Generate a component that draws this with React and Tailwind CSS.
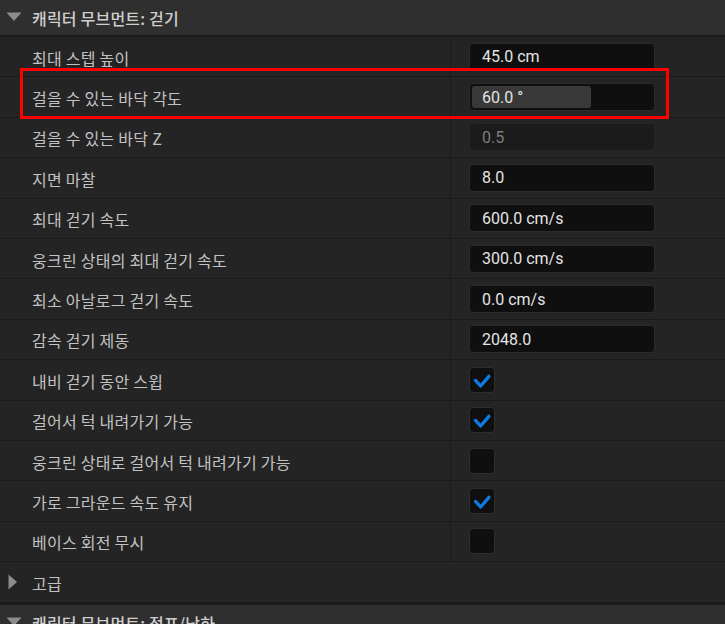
import React from "react";

const FONT = { fontFamily: '"Noto Sans CJK KR", "Noto Sans", sans-serif' };
const NUM = { fontFamily: 'Roboto, "Noto Sans CJK KR", sans-serif' };

function Check() {
  return (
    <svg width="26" height="26" viewBox="0 0 26 26" className="block">
      <path d="M6 13.5 L11.5 19.5 L20.5 9" fill="none" stroke="#0f7be0" strokeWidth="3.6" strokeLinecap="round" strokeLinejoin="round" />
    </svg>
  );
}

function Checkbox({ checked }) {
  return (
    <div className="w-[26px] h-[26px] rounded-[4px] bg-[#0f0f0f] border border-[#2e2e2e] flex items-center justify-center">
      {checked ? <Check /> : null}
    </div>
  );
}

function Input({ value, disabled, fill }) {
  return (
    <div
      className={
        "relative w-[186px] h-[28px] rounded-[4px] border flex items-center " +
        (disabled ? "bg-[#1b1b1b] border-[#262626]" : "bg-[#0f0f0f] border-[#2b2b2b]")
      }
    >
      {fill ? (
        <div className="absolute left-[2px] top-[2px] bottom-[2px] w-[119px] rounded-[3px] bg-[#383838]" />
      ) : null}
      <span
        className={"relative pl-[12px] pt-[1px] text-[16px] " + (disabled ? "text-[#7c7c7c]" : "text-[#e4e4e4]")}
        style={NUM}
      >
        {value}
      </span>
    </div>
  );
}

const rows = [
  { label: "최대 스텝 높이", input: "45.0 cm" },
  { label: "걸을 수 있는 바닥 각도", input: "60.0 °", fill: true },
  { label: "걸을 수 있는 바닥 Z", input: "0.5", disabled: true },
  { label: "지면 마찰", input: "8.0" },
  { label: "최대 걷기 속도", input: "600.0 cm/s" },
  { label: "웅크린 상태의 최대 걷기 속도", input: "300.0 cm/s" },
  { label: "최소 아날로그 걷기 속도", input: "0.0 cm/s" },
  { label: "감속 걷기 제동", input: "2048.0" },
  { label: "내비 걷기 동안 스윕", check: true },
  { label: "걸어서 턱 내려가기 가능", check: true },
  { label: "웅크린 상태로 걸어서 턱 내려가기 가능", check: false },
  { label: "가로 그라운드 속도 유지", check: true },
  { label: "베이스 회전 무시", check: false },
];

function Header({ title }) {
  return (
    <div className="h-[35px] shrink-0 bg-[#2f2f2f] flex items-center border-b-2 border-[#1a1a1a] box-content">
      <svg width="32" height="35" viewBox="0 0 32 35" className="shrink-0">
        <polygon points="6.5,12.5 21.5,12.5 14,21" fill="#8c8c8c" />
      </svg>
      <span className="text-[16px] text-[#cfcfcf] font-medium tracking-[0.2px]" style={FONT}>
        {title}
      </span>
    </div>
  );
}

export default function App() {
  return (
    <div className="relative w-[725px] h-[624px] overflow-hidden bg-[#242424]" style={FONT}>
      <Header title="캐릭터 무브먼트: 걷기" />
      {rows.map((r, i) => (
        <div key={i} className="h-[40.4px] flex border-b border-[#1a1a1a]">
          <div className="w-[451px] shrink-0 border-r border-[#1c1c1c] flex items-center pl-[32px] pt-[2px]">
            <span className="text-[16px] text-[#c2c2c2] tracking-[0.25px]">{r.label}</span>
          </div>
          <div className="flex-1 flex items-center pl-[18px]">
            {r.check !== undefined ? (
              <Checkbox checked={r.check} />
            ) : (
              <Input value={r.input} disabled={r.disabled} fill={r.fill} />
            )}
          </div>
        </div>
      ))}
      <div className="h-[40.4px] flex items-center border-b-[3px] border-[#1a1a1a] box-content">
        <svg width="32" height="40" viewBox="0 0 32 40" className="shrink-0">
          <polygon points="8.5,12.5 17,20 8.5,27.5" fill="#8c8c8c" />
        </svg>
        <span className="text-[16px] text-[#c2c2c2] pt-[2px] tracking-[0.25px]">고급</span>
      </div>
      <Header title="캐릭터 무브먼트: 점프/낙하" />
      <div className="absolute left-[20px] top-[68px] w-[649px] h-[51px] border-[3px] border-[#ff0000]" />
    </div>
  );
}
